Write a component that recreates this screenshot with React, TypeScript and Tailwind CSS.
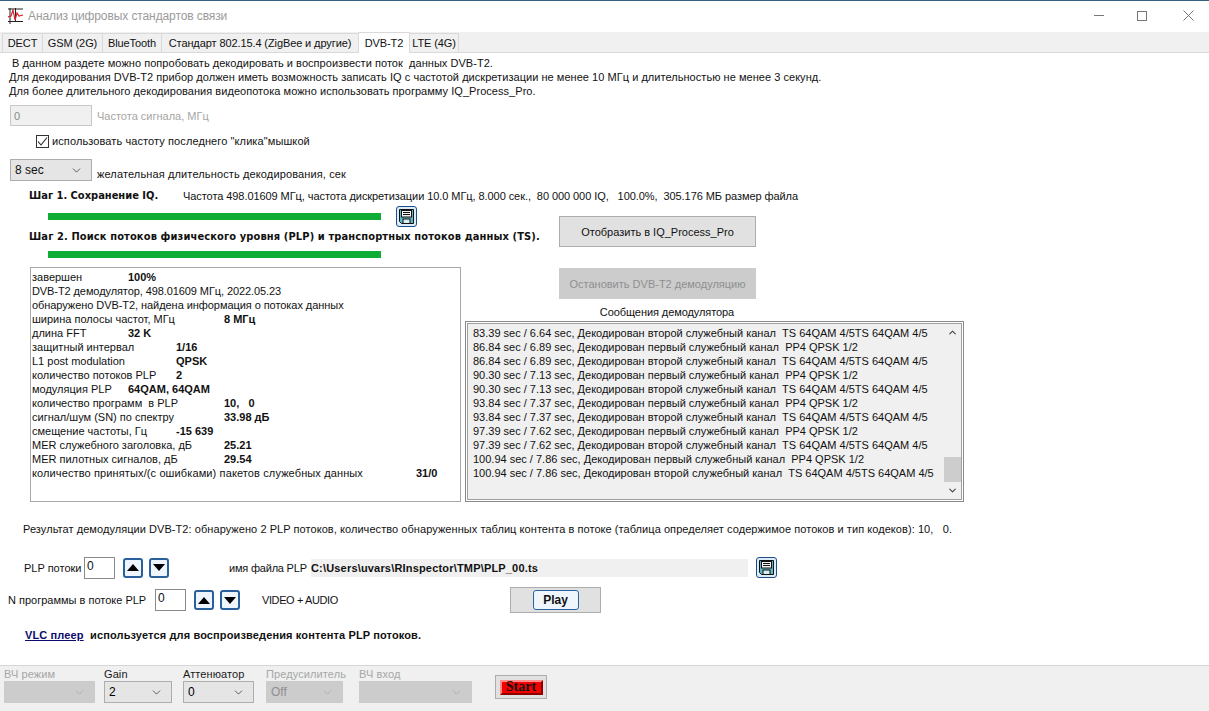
import React from 'react';
import { ChevronDown, ChevronUp } from 'lucide-react';

const tabs = [
  { name: 'DECT', w: 'w-[41px]' },
  { name: 'GSM (2G)', w: 'w-[61px]' },
  { name: 'BlueTooth', w: 'w-[60px]' },
  { name: 'Стандарт 802.15.4 (ZigBee и другие)', w: 'w-[198px]' },
];

const infoRows: { label: string; value?: string; w?: string; t?: string }[] = [
  { label: 'завершен', value: '100%', w: 'w-[96px]' },
  { label: 'DVB-T2 демодулятор, 498.01609 МГц, 2022.05.23', t: 'tracking-[-0.09px]' },
  { label: 'обнаружено DVB-T2, найдена информация о потоках данных', t: 'tracking-[-0.06px]' },
  { label: 'ширина полосы частот, МГц', value: '8 МГц', w: 'w-[192px]' },
  { label: 'длина FFT', value: '32 K', w: 'w-[96px]' },
  { label: 'защитный интервал', value: '1/16', w: 'w-[144px]' },
  { label: 'L1 post modulation', value: 'QPSK', w: 'w-[144px]' },
  { label: 'количество потоков PLP', value: '2', w: 'w-[144px]' },
  { label: 'модуляция PLP', value: '64QAM, 64QAM', w: 'w-[96px]' },
  { label: 'количество программ  в PLP', value: '10,   0', w: 'w-[192px]' },
  { label: 'сигнал/шум (SN) по спектру', value: '33.98 дБ', w: 'w-[192px]' },
  { label: 'смещение частоты, Гц', value: '-15 639', w: 'w-[144px]' },
  { label: 'MER служебного заголовка, дБ', value: '25.21', w: 'w-[192px]' },
  { label: 'MER пилотных сигналов, дБ', value: '29.54', w: 'w-[192px]' },
  { label: 'количество принятых/(с ошибками) пакетов служебных данных', value: '31/0', w: 'w-[384px]', t: 'tracking-[0.12px]' },
];

const messages = [
  '83.39 sec / 6.64 sec, Декодирован второй служебный канал  TS 64QAM 4/5TS 64QAM 4/5',
  '86.84 sec / 6.89 sec, Декодирован первый служебный канал  PP4 QPSK 1/2',
  '86.84 sec / 6.89 sec, Декодирован второй служебный канал  TS 64QAM 4/5TS 64QAM 4/5',
  '90.30 sec / 7.13 sec, Декодирован первый служебный канал  PP4 QPSK 1/2',
  '90.30 sec / 7.13 sec, Декодирован второй служебный канал  TS 64QAM 4/5TS 64QAM 4/5',
  '93.84 sec / 7.37 sec, Декодирован первый служебный канал  PP4 QPSK 1/2',
  '93.84 sec / 7.37 sec, Декодирован второй служебный канал  TS 64QAM 4/5TS 64QAM 4/5',
  '97.39 sec / 7.62 sec, Декодирован первый служебный канал  PP4 QPSK 1/2',
  '97.39 sec / 7.62 sec, Декодирован второй служебный канал  TS 64QAM 4/5TS 64QAM 4/5',
  '100.94 sec / 7.86 sec, Декодирован первый служебный канал  PP4 QPSK 1/2',
  '100.94 sec / 7.86 sec, Декодирован второй служебный канал  TS 64QAM 4/5TS 64QAM 4/5',
];

const stepFont = { fontFamily: '"DejaVu Sans Condensed", "DejaVu Sans", sans-serif' };

const SaveButton = () => (
  <div className="w-[21px] h-[21px] shrink-0 rounded-[3px] border border-[#1d4f86] bg-[#dcebfa] flex items-center justify-center">
    <svg width="15" height="15" viewBox="0 0 15 15">
      <path d="M0.5 0.5H14.5V14.5H2.5L0.5 12.5Z" fill="#5fb8c0" stroke="#111" />
      <rect x="2.5" y="1.5" width="10" height="6.5" fill="#f4f4f4" stroke="#111" />
      <path d="M4 3.5H11M4 5.5H11" stroke="#111" />
      <rect x="4" y="10" width="7" height="4.5" fill="#d8eef0" stroke="#111" />
    </svg>
  </div>
);

const ArrowButton = ({ up }: { up?: boolean }) => (
  <div className="w-5 h-5 shrink-0 rounded-[3px] border-2 border-[#2a619c] bg-[#eef5fd] flex items-center justify-center">
    <svg width="12" height="7" viewBox="0 0 12 7">
      <path d={up ? 'M6 0L12 7H0Z' : 'M6 7L12 0H0Z'} fill="#000" />
    </svg>
  </div>
);

const Combo = ({ w, label, value, disabled }: { w: string; label: string; value?: string; disabled?: boolean }) => (
  <div className={`${w} shrink-0`}>
    <div className={`h-[14px] leading-[14px] tracking-[0.1px] whitespace-nowrap ${disabled ? 'text-[#a6a6a6]' : 'text-[#1a1a1a]'}`}>{label}</div>
    <div
      className={`h-[22px] flex items-center justify-between pl-1 pr-2 border text-[12px] ${
        disabled ? 'bg-[#cccccc] border-[#cccccc] text-[#8f8f8f]' : 'bg-[#e5e5e5] border-[#adadad] text-black'
      }`}
    >
      <span>{value}</span>
      <ChevronDown size={13} strokeWidth={1.4} className={disabled ? 'text-[#a5a5a5]' : 'text-[#333]'} />
    </div>
  </div>
);

const App: React.FC = () => {
  return (
    <div
      className="w-[1209px] h-[711px] overflow-hidden flex flex-col bg-white text-[11px] leading-[14px] text-[#111]"
      style={{ fontFamily: '"Liberation Sans", Arial, sans-serif' }}
    >
      {/* title bar */}
      <div className="h-[32px] shrink-0 border-t border-[#33607f] flex items-center pl-2 pb-[2px]">
        <svg width="16" height="16" viewBox="0 0 16 16" className="shrink-0">
          <path d="M2 0V16M7.5 0V14M0 1H15M0 13.5H15" stroke="#222" strokeWidth="1" fill="none" />
          <path d="M0 9L3 8L5 2L7 12L9 5L11 8L15 7" stroke="#d8232a" strokeWidth="1.2" fill="none" />
        </svg>
        <span className="ml-[4px] text-[12px] tracking-[-0.1px] text-[#9b9b9b]">Анализ цифровых стандартов связи</span>
        <div className="ml-auto flex items-center pr-[15px]">
          <div className="w-[10px] h-px bg-[#777]" />
          <div className="ml-[33px] w-[10px] h-[10px] border border-[#777]" />
          <svg width="11" height="11" viewBox="0 0 11 11" className="ml-[36px]">
            <path d="M0.5 0.5L10.5 10.5M10.5 0.5L0.5 10.5" stroke="#777" />
          </svg>
        </div>
      </div>

      {/* tabs */}
      <div className="h-[21px] shrink-0 bg-[#f0f0f0] flex items-end pl-[2px] border-b border-[#d9d9d9] tracking-[-0.1px]">
        {tabs.map((t) => (
          <div key={t.name} className={`${t.w} h-[19px] flex items-center justify-center border border-b-0 border-[#d9d9d9] -mr-px whitespace-nowrap`}>
            {t.name}
          </div>
        ))}
        <div className="w-[52px] h-[21px] -mb-px flex items-center justify-center bg-white border border-b-0 border-[#d9d9d9] z-10">DVB-T2</div>
        <div className="w-[49px] h-[19px] flex items-center justify-center border border-b-0 border-l-0 border-[#d9d9d9]">LTE (4G)</div>
      </div>

      {/* page */}
      <div className="flex-1 min-h-0 flex flex-col">
        <div className="pl-[9px] pt-[3px] whitespace-pre tracking-[0.04px]">
          <div> В данном раздете можно попробовать декодировать и воспроизвести поток  данных DVB-T2.</div>
          <div>Для декодирования DVB-T2 прибор должен иметь возможность записать IQ с частотой дискретизации не менее 10 МГц и длительностью не менее 3 секунд.</div>
          <div>Для более длительного декодирования видеопотока можно использовать программу IQ_Process_Pro.</div>
        </div>

        <div className="mt-[7px] ml-[10px] flex items-center gap-[5px]">
          <div className="w-[82px] h-[21px] border border-[#c8c8c8] bg-[#f0f0f0] pl-[3px] flex items-center text-[#8a8a8a]">0</div>
          <span className="text-[#a6a6a6]">Частота сигнала, МГц</span>
        </div>

        <div className="mt-[8px] ml-[36px] flex items-center gap-[3px]">
          <div className="w-[13px] h-[13px] border border-[#333] flex items-center justify-center">
            <svg width="11" height="11" viewBox="0 0 11 11">
              <path d="M1 5.5L4 9L10 1.5" stroke="#222" strokeWidth="1.1" fill="none" />
            </svg>
          </div>
          <span className="tracking-[0.1px]">использовать частоту последнего "клика"мышкой</span>
        </div>

        <div className="mt-[11px] ml-[10px] flex items-start gap-[5px]">
          <div className="w-[82px] h-[22px] border border-[#adadad] bg-[#e5e5e5] flex items-center justify-between pl-1 pr-2 text-[12px]">
            <span>8 sec</span>
            <ChevronDown size={13} strokeWidth={1.4} className="text-[#333]" />
          </div>
          <span className="mt-[8px] tracking-[0.13px]">желательная длительность декодирования, сек</span>
        </div>

        <div className="mt-[8px] ml-[29px] flex items-center h-[14px] whitespace-pre">
          <span className="w-[154px] font-bold font-stretch-condensed" style={stepFont}>Шаг 1. Сохранение IQ.</span>
          <span className="tracking-[-0.07px]">Частота 498.01609 МГц, частота дискретизации 10.0 МГц, 8.000 сек.,  80 000 000 IQ,   100.0%,  305.176 МБ размер файла</span>
        </div>

        <div className="flex">
          {/* left column */}
          <div className="w-[461px] shrink-0 pl-[30px]">
            <div className="mt-[1px] h-[25px] flex items-center pl-[18px]">
              <div className="w-[333px] h-[7px] bg-[#0fad36]" />
              <div className="ml-[15px]"><SaveButton /></div>
            </div>
            <div className="-ml-px mt-[1px] h-[14px] whitespace-nowrap font-bold font-stretch-condensed tracking-[0.12px]" style={stepFont}>
              Шаг 2. Поиск потоков физического уровня (PLP) и транспортных потоков данных (TS).
            </div>
            <div className="mt-[7px] ml-[18px] w-[333px] h-[7px] bg-[#0fad36]" />
            <div className="mt-[9px] h-[235px] border border-[#a8a8a8] pl-[1px] pt-[2px]">
              {infoRows.map((r) => (
                <div key={r.label} className={`h-[14px] whitespace-pre flex ${r.t ?? ''}`}>
                  <span className={r.w ? `${r.w} shrink-0` : ''}>{r.label}</span>
                  {r.value && <span className="font-bold tracking-normal">{r.value}</span>}
                </div>
              ))}
            </div>
          </div>

          {/* right column */}
          <div className="flex-1 min-w-0 pl-[4px]">
            <div className="mt-[13px] ml-[94px] w-[197px] h-[31px] bg-[#e1e1e1] border border-[#adadad] flex items-center justify-center">
              Отобразить в IQ_Process_Pro
            </div>
            <div className="mt-[21px] ml-[94px] w-[197px] h-[31px] bg-[#cccccc] text-[#8f8f8f] flex items-center justify-center">
              Остановить DVB-T2 демодуляцию
            </div>
            <div className="mt-[6px] h-[14px] w-[404px] text-center tracking-[-0.08px]">Сообщения демодулятора</div>
            <div className="mt-[2px] w-[499px] h-[181px] border border-[#8a8a8a] p-px">
              <div className="h-full border border-[#a0a0a0] bg-[#f0f0f0] flex">
                <div className="flex-1 min-w-0 pl-[5px] pt-[2px] whitespace-pre">
                  {messages.map((m, i) => (
                    <div key={i} className="h-[14px]">{m}</div>
                  ))}
                </div>
                <div className="w-[17px] shrink-0 flex flex-col items-center">
                  <ChevronUp size={11} strokeWidth={2.4} className="mt-[3px] text-[#444]" />
                  <div className="mt-auto w-full h-[25px] bg-[#cdcdcd]" />
                  <ChevronDown size={11} strokeWidth={2.4} className="mt-[3px] mb-[3px] text-[#444]" />
                </div>
              </div>
            </div>
          </div>
        </div>

        <div className="mt-[20px] ml-[23px] whitespace-pre tracking-[0.06px]">Результат демодуляции DVB-T2: обнаружено 2 PLP потоков, количество обнаруженных таблиц контента в потоке (таблица определяет содержимое потоков и тип кодеков): 10,   0.</div>

        <div className="mt-[20px] ml-[24px] flex items-center h-[23px]">
          <span className="w-[60px]">PLP потоки</span>
          <div className="w-[31px] h-[22px] border border-[#8a8a8a] pl-[2px] leading-[16px] text-[12px]">0</div>
          <div className="ml-[8px]"><ArrowButton up /></div>
          <div className="ml-[6px]"><ArrowButton /></div>
          <span className="ml-[60px] w-[82px] tracking-[-0.2px]">имя файла PLP</span>
          <div className="w-[437px] h-[18px] bg-[#f0f0f0] font-bold flex items-center tracking-[0.18px]">C:\Users\uvars\RInspector\TMP\PLP_00.ts</div>
          <div className="ml-[8px]"><SaveButton /></div>
        </div>

        <div className="mt-[8px] ml-[8px] flex items-center h-[26px]">
          <span className="w-[147px]">N программы в потоке PLP</span>
          <div className="w-[31px] h-[22px] border border-[#8a8a8a] pl-[2px] leading-[16px] text-[12px]">0</div>
          <div className="ml-[8px]"><ArrowButton up /></div>
          <div className="ml-[6px]"><ArrowButton /></div>
          <span className="ml-[22px] w-[248px] tracking-[-0.4px]">VIDEO + AUDIO</span>
          <div className="w-[91px] h-[26px] bg-[#e1e1e1] border border-[#adadad] flex items-center justify-center">
            <div className="w-[46px] h-[20px] rounded-[3px] border border-[#2a619c] bg-[#eef5fd] flex items-center justify-center font-bold text-[12px]">Play</div>
          </div>
        </div>

        <div className="mt-[15px] ml-[25px] h-[14px] font-bold whitespace-pre tracking-[0.13px]">
          <span className="underline text-[#0b0b6e]">VLC плеер</span>  используется для воспроизведения контента PLP потоков.
        </div>
      </div>

      {/* bottom bar */}
      <div className="h-[46px] shrink-0 bg-[#f0f0f0] border-t border-[#d6d6d6] flex pl-[4px] pt-[1px]">
        <Combo w="w-[91px]" label="ВЧ режим" disabled />
        <div className="ml-[9px]"><Combo w="w-[68px]" label="Gain" value="2" /></div>
        <div className="ml-[11px]"><Combo w="w-[71px]" label="Аттенюатор" value="0" /></div>
        <div className="ml-[12px]"><Combo w="w-[77px]" label="Предусилитель" value="Off" disabled /></div>
        <div className="ml-[16px]"><Combo w="w-[113px]" label="ВЧ вход" disabled /></div>
        <div className="ml-[23px] mt-[8px] w-[52px] h-[24px] bg-[#e1e1e1] border border-[#adadad] flex items-center justify-center">
          <div
            className="w-[43px] h-[15px] bg-[#f30000] border-2 border-t-[#ff8a8a] border-l-[#ff8a8a] border-r-[#8a0000] border-b-[#8a0000] flex items-center justify-center font-bold text-[14px] leading-none"
            style={{ fontFamily: '"Liberation Serif", serif' }}
          >
            Start
          </div>
        </div>
      </div>
    </div>
  );
};

export default App;
